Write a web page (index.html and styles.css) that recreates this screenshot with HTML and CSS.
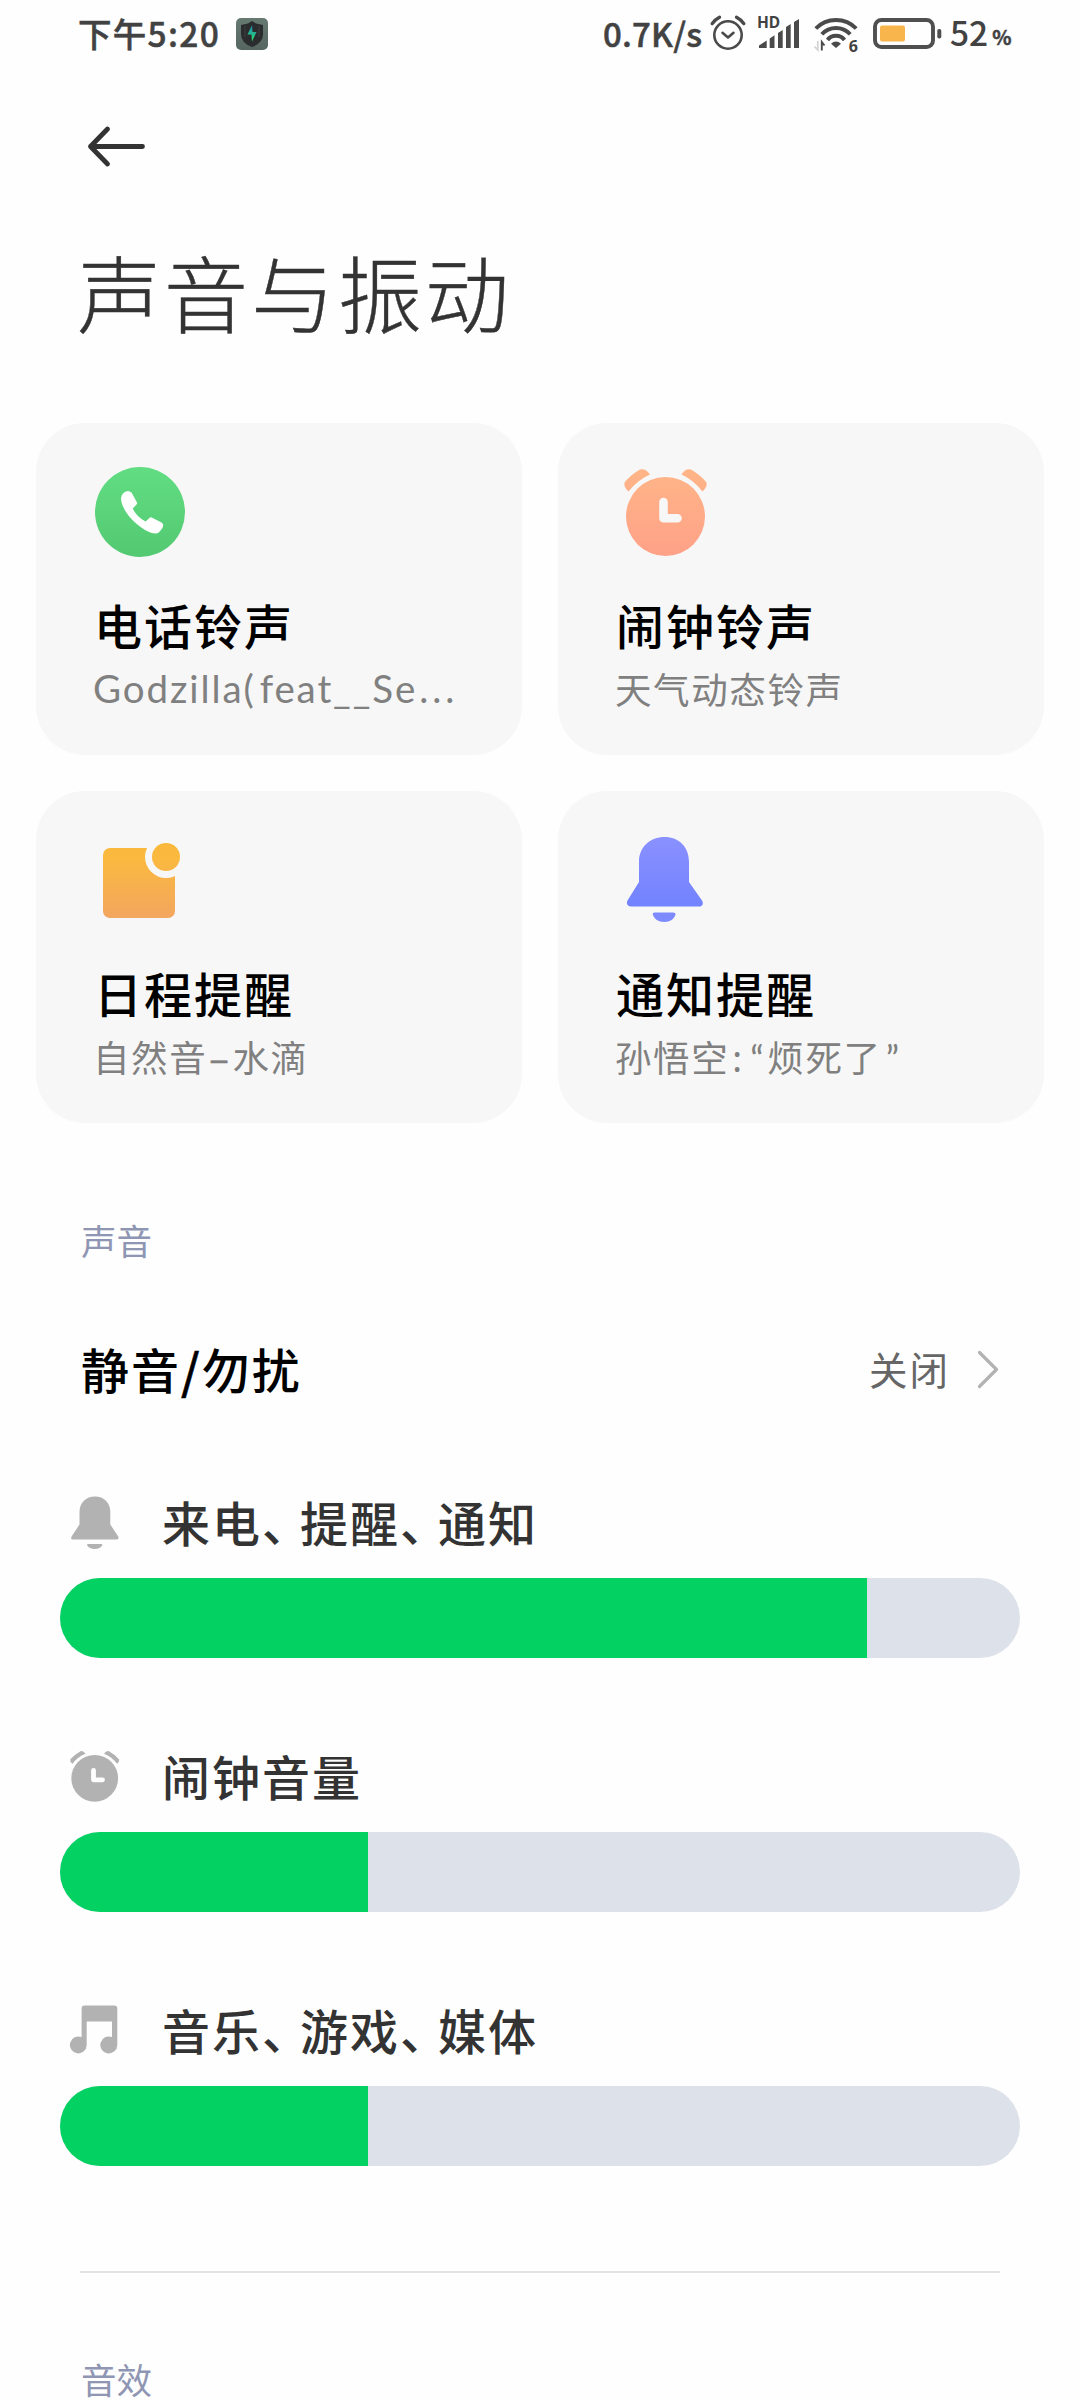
FILE: index.html
```html
<!DOCTYPE html>
<html lang="zh-CN">
<head>
<meta charset="utf-8">
<title>声音与振动</title>
<link rel="stylesheet" href="styles.css">
</head>
<body>
<div class="status">
  <span class="clock">下午5:20</span>
  <svg class="app" width="32" height="32" viewBox="0 0 32 32">
    <defs>
      <linearGradient id="bolt" x1="0" y1="0" x2="0" y2="1"><stop offset="0" stop-color="#1c84b4"/><stop offset="1" stop-color="#2ee66e"/></linearGradient>
      <linearGradient id="plate" x1="0" y1="0" x2="0" y2="1"><stop offset="0" stop-color="#667a72"/><stop offset="1" stop-color="#55665f"/></linearGradient>
    </defs>
    <rect width="32" height="32" rx="5" fill="url(#plate)"/>
    <path d="M16 3 20 5.500 27 7V16Q27 25 16 29Q5 25 5 16V7L12 5.500Z" fill="#2a2c2d"/>
    <path d="M9 8V19M23 8V19" stroke="#3c3f40" stroke-width="1"/>
    <path d="M16 7 11.500 16.500H15.500L16 23.500 20.500 14H16.500Z" fill="url(#bolt)"/>
  </svg>
  <span class="speed">0.7K/s</span>
  <svg class="s-alarm" width="36" height="36" viewBox="0 0 36 36" fill="none" stroke="#4a4a4a" stroke-linecap="round">
    <circle cx="18" cy="20" r="13.700" stroke-width="2.600"/>
    <path d="M12.500 17.800 18 22.500 23.500 17.800" stroke-width="2.600" stroke-linejoin="round"/>
    <path d="M2.200 8.600Q5 4.500 9.500 2.200M33.800 8.600Q31 4.500 26.500 2.200" stroke-width="3.400"/>
  </svg>
  <span class="signal">
    <span class="hd">HD</span>
    <svg width="42" height="32" viewBox="0 0 42 32" fill="#4a4a4a"><path d="M1 30V27.500L8.700 22.500V30ZM11.700 20.500 16.500 17.300V30H11.700ZM20 15 24.700 12V30H20ZM28 9 32.700 6V30H28ZM36 4 41 1V30H36Z"/></svg>
  </span>
  <span class="wifi">
    <svg width="44" height="36" viewBox="0 0 44 36" fill="none" stroke="#4a4a4a" stroke-width="3.900">
      <path d="M1.800 12.500Q10 4 22 4T42.200 12.500"/>
      <path d="M7.800 18.300Q13.500 12 22 12T36.200 18.300"/>
      <path d="M13.500 24Q16.500 19.800 22 19.800T30.500 24"/>
      <path d="M22 32 17 27.700Q22 23.500 27 27.700Z" fill="#4a4a4a" stroke="none"/>
      <path d="M3.800 25V34L.5 30.500" stroke="#d4d4d4" stroke-width="1.800"/>
      <path d="M7.800 34.500V26L10.500 29.500" stroke-width="1.900"/>
    </svg>
    <span class="gen">6</span>
  </span>
  <svg class="battery" width="70" height="32" viewBox="0 0 70 32">
    <rect x="2" y="2" width="58" height="27" rx="6.500" fill="none" stroke="#4f4f4f" stroke-width="3.900"/>
    <rect x="7" y="7.500" width="25" height="16" rx="2" fill="#f8b54c"/>
    <rect x="64.300" y="11" width="4" height="9.500" rx="1.800" fill="#4f4f4f"/>
  </svg>
  <span class="level">52</span><span class="pct">%</span>
</div>

<div class="nav">
  <svg width="60" height="44" viewBox="0 0 60 44" fill="none" stroke="#333" stroke-width="4.800" stroke-linecap="round" stroke-linejoin="round"><path d="M56.500 22.500H4.500M21.500 5 4.500 22.500 21.500 40"/></svg>
</div>
<h1 class="title">声音与振动</h1>

<div class="cards">
  <div class="card">
    <svg width="90" height="90" viewBox="0 0 90 90">
      <defs><linearGradient id="green" x1="0" y1="0" x2="0" y2="1"><stop offset="0" stop-color="#62dd83"/><stop offset="1" stop-color="#53c971"/></linearGradient></defs>
      <circle cx="45" cy="45" r="45" fill="url(#green)"/>
      <path d="M29 25.500Q33 22.500 36.500 25.500L42 35.500Q42.500 36.700 41.500 37.500L37.700 41.500Q41 49 50.500 54.500L54.700 50.700Q55.500 50 56.700 50.500L66.500 55.500Q69.500 57.500 67.300 61.200L64.500 64.800Q63.300 66.300 61 66.500C50 67 26.500 47 26 31.500Q26 27.800 29 25.500Z" fill="#fff"/>
    </svg>
    <div class="name">电话铃声</div>
    <div class="value latin">Godzilla<span class="paren">(</span>feat__Se<span class="dots">...</span></div>
  </div>
  <div class="card">
    <svg width="90" height="90" viewBox="0 0 90 90">
      <defs><linearGradient id="peach" gradientUnits="userSpaceOnUse" x1="0" y1="2" x2="0" y2="89"><stop offset="0" stop-color="#ffb587"/><stop offset="1" stop-color="#ffa188"/></linearGradient></defs>
      <g fill="url(#peach)">
        <circle cx="48.500" cy="49.500" r="39.500"/>
        <path d="M7.500 15.500Q14 7.500 23 2.500Q28.500 1 33 7.500Q21 12.500 11.500 24.500Q6.500 20 7.500 15.500Z"/>
        <path d="M89.500 15.500Q83 7.500 74 2.500Q68.500 1 64.500 7.500Q76 12.500 85.500 24.500Q90.500 20 89.500 15.500Z"/>
      </g>
      <path d="M46.500 35V51.200H60.500" fill="none" stroke="#f7f7f7" stroke-width="8.600" stroke-linecap="round" stroke-linejoin="round"/>
    </svg>
    <div class="name">闹钟铃声</div>
    <div class="value">天气动态铃声</div>
  </div>
  <div class="card">
    <svg width="90" height="90" viewBox="0 0 90 90">
      <defs><linearGradient id="amber" gradientUnits="userSpaceOnUse" x1="0" y1="8" x2="0" y2="83"><stop offset="0" stop-color="#fab93c"/><stop offset=".2" stop-color="#fab93f"/><stop offset="1" stop-color="#f3a65f"/></linearGradient></defs>
      <g fill="url(#amber)">
        <rect x="8" y="13" width="72" height="70" rx="7"/>
        <circle cx="71" cy="22" r="21" fill="#f7f7f7"/>
        <circle cx="71" cy="22" r="14"/>
      </g>
    </svg>
    <div class="name">日程提醒</div>
    <div class="value">自然音<span class="dash">–</span>水滴</div>
  </div>
  <div class="card">
    <svg width="90" height="90" viewBox="0 0 90 90">
      <defs><linearGradient id="violet" gradientUnits="userSpaceOnUse" x1="0" y1="2" x2="0" y2="72"><stop offset="0" stop-color="#8a91ff"/><stop offset="1" stop-color="#7282ff"/></linearGradient></defs>
      <path d="M22 47V27C22 12 33 2 47.500 2S72 12 72 27V47L85 65.500C87 69 85 71.500 82.500 71.500H14C10.500 71.500 9 68 10.500 65.500Z" fill="url(#violet)"/>
      <path d="M37.500 77.500H56.500Q58.500 77.500 58.500 79.500C57.500 84 53 87 47.200 87S37 84 35.800 79.500Q35.500 77.500 37.500 77.500Z" fill="#7d8bff"/>
    </svg>
    <div class="name">通知提醒</div>
    <div class="value">孙悟空<span class="colon">:</span><span class="quote">“</span>烦死了<span class="quote">”</span></div>
  </div>
</div>

<h2 class="label">声音</h2>
<div class="row">
  <span class="row-name">静音<span class="slash">/</span>勿扰</span>
  <span class="row-value">关闭</span>
  <svg width="24" height="40" viewBox="0 0 24 40" fill="none" stroke="#b2b2b2" stroke-width="3.200" stroke-linecap="round" stroke-linejoin="round"><path d="M3.500 3.500 20.500 20.500 3.500 37.500"/></svg>
</div>

<div class="volume">
  <div class="head">
    <svg width="56" height="56" viewBox="0 0 56 56" fill="#b2b2b2">
      <path d="M10.500 30.500V18C10.500 8.500 17 2.500 26 2.500S41.300 8.500 41.300 18V30.500L49.200 42.500Q50.500 45.500 47.700 45.500H4Q1.200 45.500 2.600 42.500Z"/>
      <path d="M19.200 50H32.200Q33.700 50 33.200 51.200Q31.200 55 25.700 55T18.200 51.200Q17.700 50 19.200 50Z"/>
    </svg>
    <span>来电<i>、</i>提醒<i>、</i>通知</span>
  </div>
  <div class="bar"><div class="fill" style="width:807px"></div></div>
</div>
<div class="volume">
  <div class="head">
    <svg width="56" height="56" viewBox="0 0 56 56" fill="#b2b2b2">
      <circle cx="25.700" cy="30.300" r="23.400"/>
      <path d="M1.200 11.500Q5.500 6.500 11.500 3.200Q14.500 2.500 16.500 5.800Q8.500 9 3.500 15.800Q.8 14 1.200 11.500ZM50.200 11.500Q46 6.500 40 3.200Q37 2.500 35 5.800Q43 9 48 15.800Q50.600 14 50.200 11.500Z"/>
      <path d="M24.500 22.300V31.800H33.500" fill="none" stroke="#fefefe" stroke-width="4.800" stroke-linecap="round" stroke-linejoin="round"/>
    </svg>
    <span>闹钟音量</span>
  </div>
  <div class="bar"><div class="fill" style="width:308px"></div></div>
</div>
<div class="volume">
  <div class="head">
    <svg width="56" height="56" viewBox="0 0 56 56" fill="#b2b2b2">
      <path d="M12.600 35.500V6.500Q12.600 3.500 15.600 3.500H45.300Q48.300 3.500 48.300 6.500V43A8.500 8.500 0 1 1 43 35.100V19.500H17.700V43A8.400 8.500 0 1 1 12.600 35.100Z"/>
    </svg>
    <span>音乐<i>、</i>游戏<i>、</i>媒体</span>
  </div>
  <div class="bar"><div class="fill" style="width:308px"></div></div>
</div>
<hr class="rule">
<h2 class="label last">音效</h2>
</body>
</html>
```
FILE: styles.css
```css
* { box-sizing: border-box; }
body {
  margin: 0;
  width: 1080px;
  height: 2400px;
  overflow: hidden;
  background: #fefefe;
  color: #000;
  font-family: "Noto Sans CJK SC", "Noto Sans", sans-serif;
}
svg { display: block; flex: none; overflow: visible; }

.status {
  display: flex;
  align-items: center;
  height: 68px;
  padding: 0 0 0 78px;
  color: #424242;
  font-weight: 500;
  line-height: 40px;
  white-space: nowrap;
  -webkit-text-stroke: .5px #424242;
}
.clock { width: 158px; font-size: 33.500px; letter-spacing: 1.300px; padding-bottom: 3px; }
.speed { width: 107px; margin-left: 335px; font-size: 33px; letter-spacing: .2px; padding-bottom: 3px; }
.s-alarm { margin-top: -2px; }
.signal, .wifi { position: relative; -webkit-text-stroke: 0; }
.signal { margin-left: 12px; }
.hd {
  position: absolute;
  left: -1px;
  top: -6px;
  font: 700 15.500px/20px "Noto Sans", sans-serif;
}
.wifi { margin-left: 14px; }
.gen {
  position: absolute;
  right: 0;
  bottom: -2px;
  font: 700 16px/16px "Noto Sans", sans-serif;
}
.battery { margin-left: 15px; }
.level { margin-left: 7px; font-size: 33.500px; padding-bottom: 4px; -webkit-text-stroke: 0; }
.pct { margin-left: 4px; font-size: 20px; padding-top: 5px; font-weight: 700; }

.nav { height: 112px; padding: 56px 0 0 86px; }
.title {
  margin: 61px 0 0 77px;
  font-size: 84px;
  line-height: 100px;
  letter-spacing: 3px;
  font-weight: 300;
  color: #333;
  -webkit-text-stroke: .4px #333;
}

.cards {
  display: grid;
  grid-template-columns: 486px 486px;
  grid-auto-rows: 332px;
  gap: 36px;
  margin: 82px 36px 0;
}
.card {
  padding: 44px 58px 0 59px;
  border-radius: 49px;
  background: #f7f7f7;
}
.name {
  margin: 39px 0 14px -1px;
  font-size: 48px;
  font-weight: 500;
  line-height: 56px;
  letter-spacing: 2px;
}
.value {
  margin-left: -2px;
  font-size: 36.500px;
  line-height: 45px;
  letter-spacing: 1.600px;
  color: #808080;
  white-space: nowrap;
}
.latin { font-family: Lato, sans-serif; font-size: 38.500px; letter-spacing: 1.900px; }
.paren { margin-right: 4px; }
.dots { letter-spacing: 4px; margin-left: 2px; }
.dash { margin: 0 2px; -webkit-text-stroke: .6px #808080; }
.colon, .quote {
  display: inline-block;
  letter-spacing: 0;
  line-height: 40px;
}
.colon { width: 17px; padding-left: 3px; font-family: "Noto Sans", sans-serif; }
.quote { width: 21px; padding-left: 4px; font-family: Lato, sans-serif; }

.label {
  margin: 95px 0 0 81px;
  font-size: 35.500px;
  line-height: 44px;
  font-weight: 400;
  color: #8f96b3;
}
.row {
  display: flex;
  align-items: center;
  height: 80px;
  margin-top: 67px;
  padding: 0 80px 0 81px;
}
.row-name { flex: 1; font-size: 48px; font-weight: 500; letter-spacing: 2px; line-height: 60px; margin-top: -2px; }
.slash { -webkit-text-stroke: .6px #000; }
.row-value { font-size: 38.500px; letter-spacing: 2px; color: #666; margin: -3px 26px 0 0; }

.volume { margin: 90px 60px 0; }
.row + .volume { margin-top: 85px; }
.head {
  display: flex;
  align-items: center;
  gap: 37px;
  height: 56px;
  margin-bottom: 28px;
  padding-left: 9px;
  font-size: 48px;
  font-weight: 500;
  letter-spacing: 2px;
  line-height: 56px;
  color: #333;
}
.head span { margin-top: -2px; }
.head i { font-style: normal; font-feature-settings: "halt"; margin-right: 12px; }
.bar {
  height: 80px;
  overflow: hidden;
  border-radius: 40px;
  background: #dde1ea;
}
.fill { height: 80px; background: #03d162; }
.rule {
  height: 2px;
  margin: 105px 80px 0;
  border: 0;
  background: #e3e3e3;
}
.last { margin-top: 87px; line-height: 38px; height: 38px; }
```
